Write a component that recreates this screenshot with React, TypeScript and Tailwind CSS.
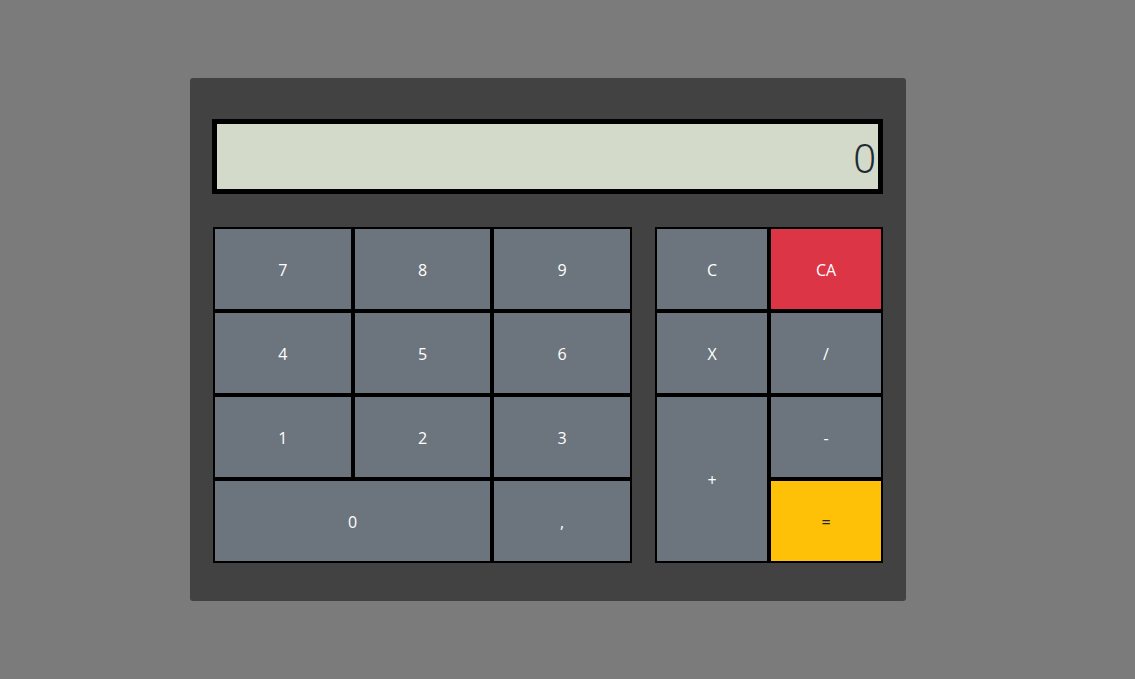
const keyBase =
  "flex items-center justify-center border-2 border-black text-[16px] leading-none pt-[2px]";

function Key({ label, className = "" }: { label: string; className?: string }) {
  return (
    <button className={`${keyBase} ${className || "bg-[#6c757d] text-white"}`}>{label}</button>
  );
}

export default function App() {
  return (
    <div
      className="w-[1135px] h-[679px] bg-[#7b7b7b] pt-[78px] pl-[190px]"
      style={{ fontFamily: "'Open Sans', 'Noto Sans', sans-serif" }}
    >
      <div className="w-[716px] h-[523px] bg-[#424242] rounded-[3px] pt-[41px] pl-[22px] pr-[23px]">
        {/* display */}
        <div className="h-[75px] border-[5px] border-black bg-[#d3dac9] flex items-center justify-end pr-[2px]">
          <span
            className="text-[40px] leading-none font-light text-[#1e2a33] mt-[3px]"
            style={{ fontFamily: "'Noto Sans', 'DejaVu Sans', sans-serif" }}
          >
            0
          </span>
        </div>

        <div className="flex mt-[33px] gap-[23px] pl-[1px]">
          {/* numbers */}
          <div className="grid grid-cols-3 grid-rows-[repeat(4,84px)] w-[419px]">
            <Key label="7" />
            <Key label="8" />
            <Key label="9" />
            <Key label="4" />
            <Key label="5" />
            <Key label="6" />
            <Key label="1" />
            <Key label="2" />
            <Key label="3" />
            <Key label="0" className="col-span-2 bg-[#6c757d] text-white" />
            <Key label="," />
          </div>

          {/* operators */}
          <div className="grid grid-cols-2 grid-rows-[repeat(4,84px)] w-[228px]">
            <Key label="C" />
            <Key label="CA" className="bg-[#dc3545] text-white" />
            <Key label="X" />
            <Key label="/" />
            <Key label="+" className="row-span-2 bg-[#6c757d] text-white" />
            <Key label="-" />
            <Key label="=" className="bg-[#ffc107] text-[#212529]" />
          </div>
        </div>
      </div>
    </div>
  );
}
